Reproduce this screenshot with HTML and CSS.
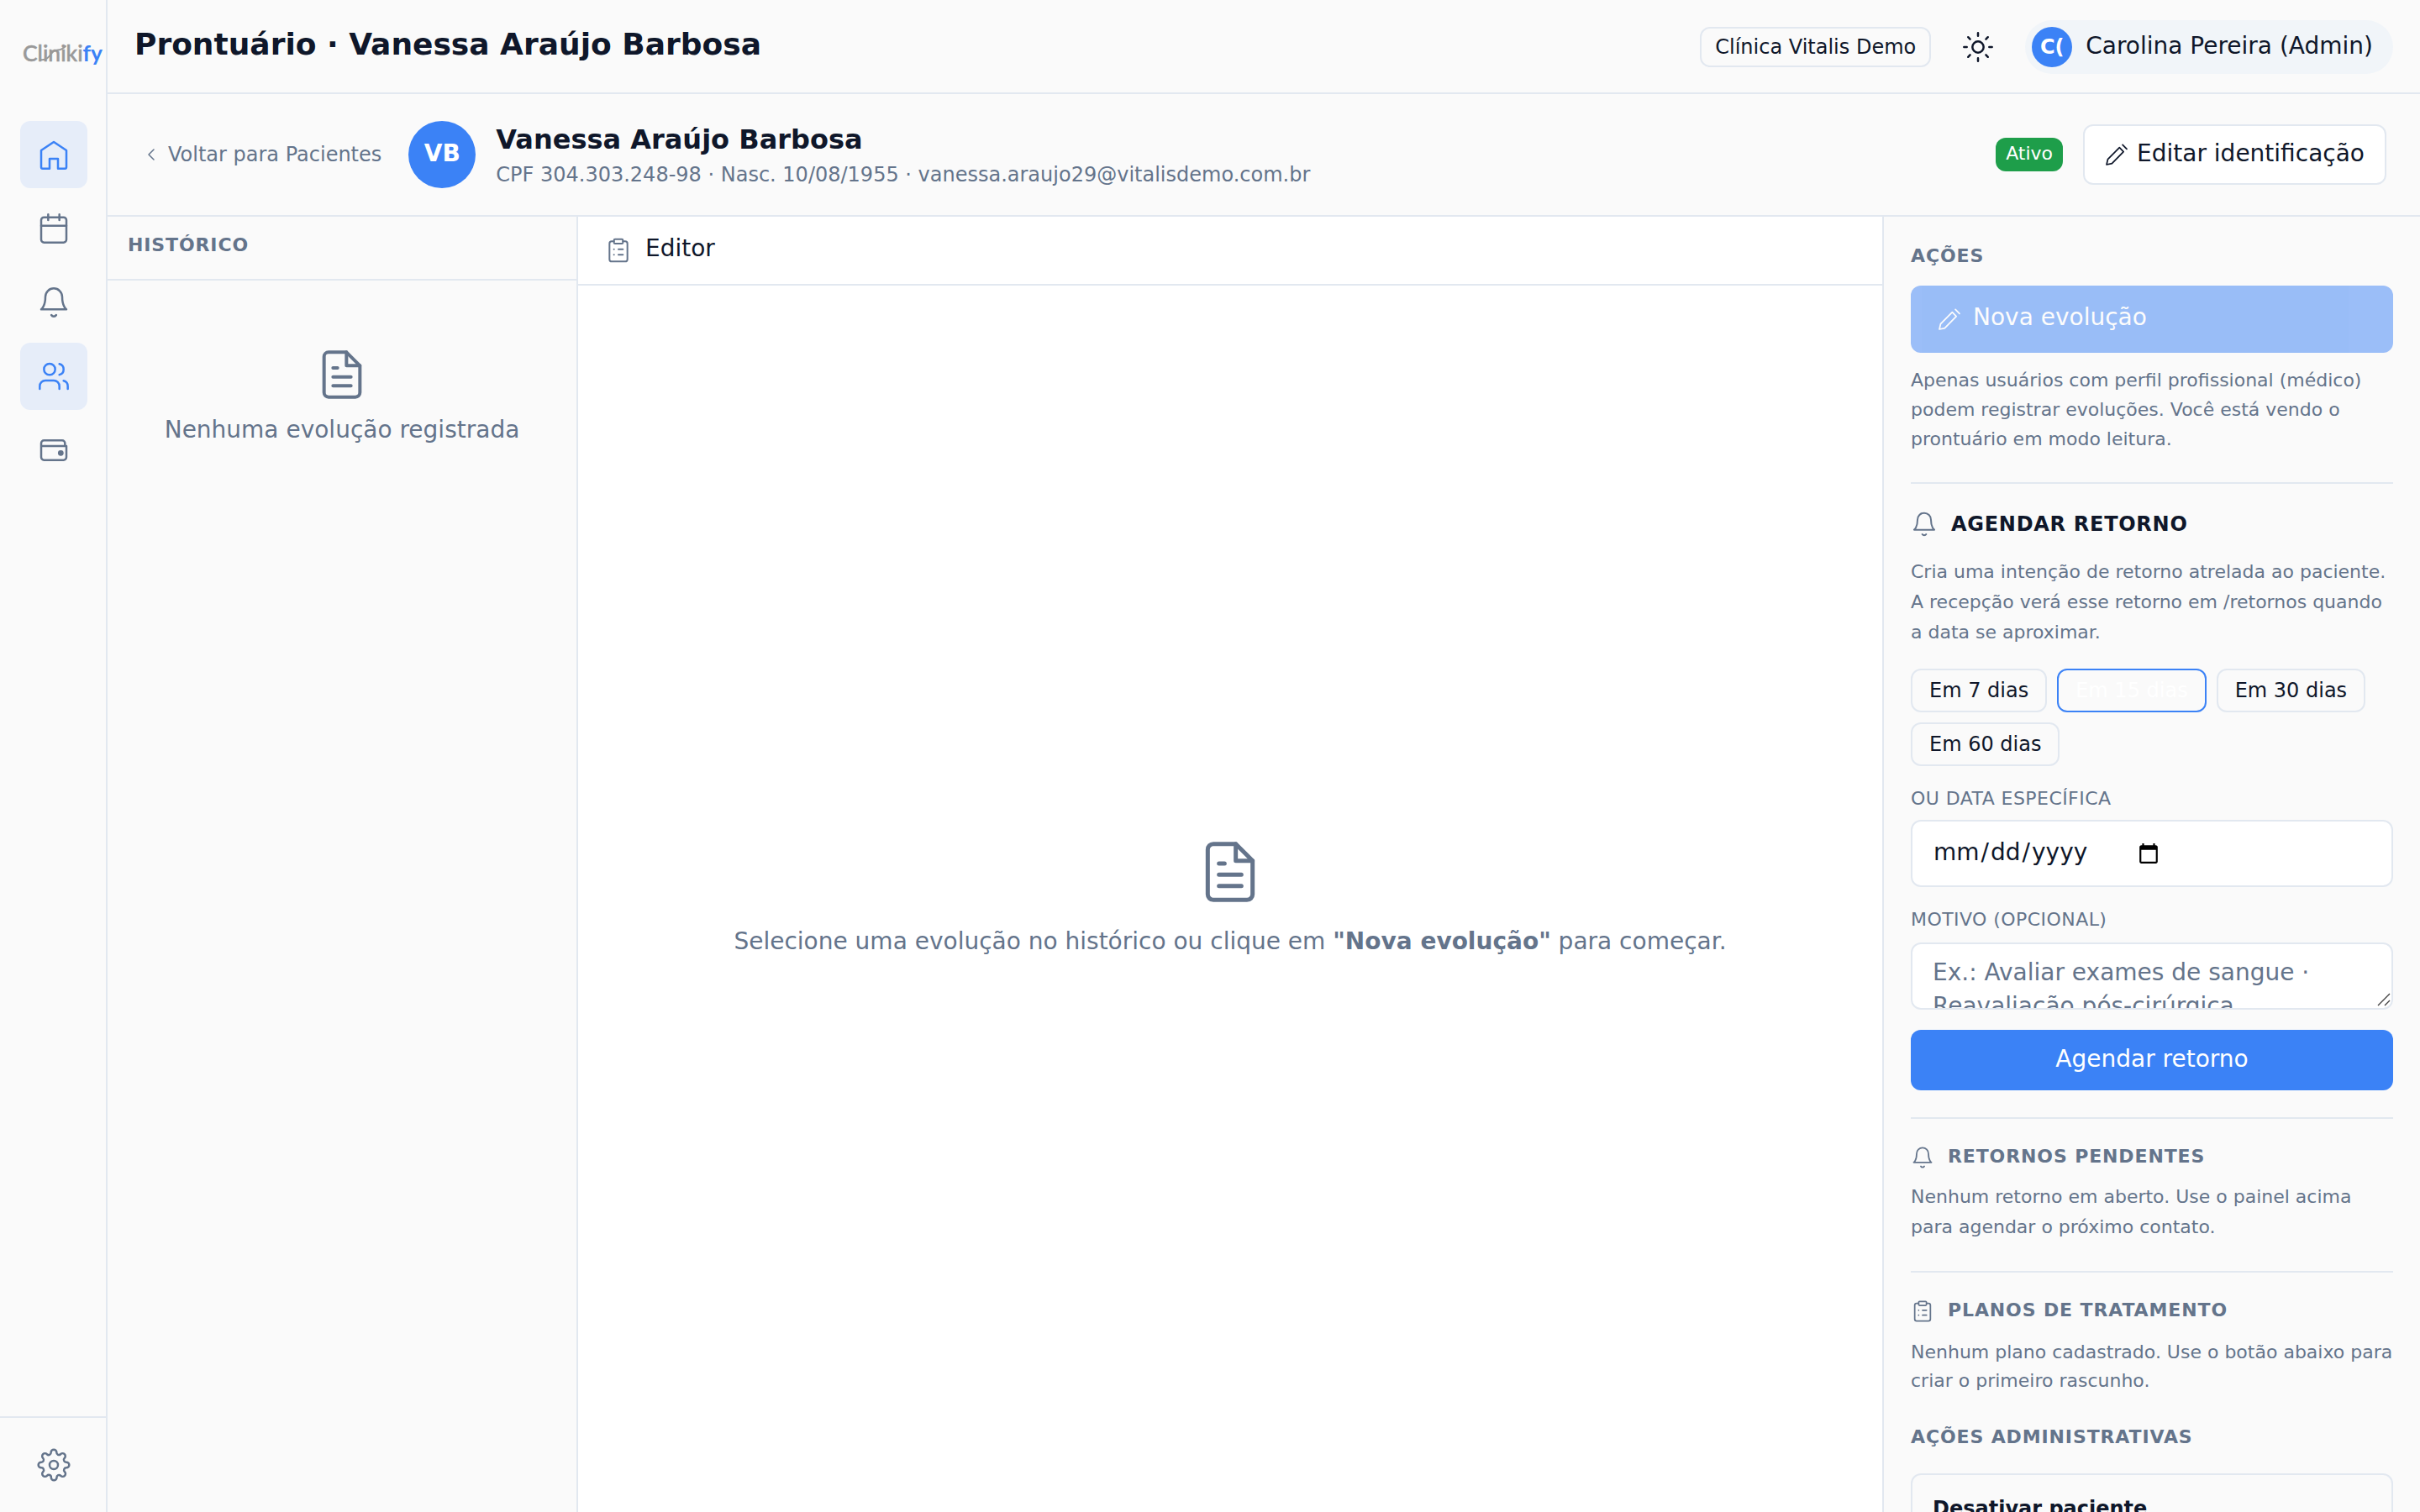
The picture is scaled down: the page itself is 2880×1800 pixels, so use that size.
FILE: index.html
```html
<!DOCTYPE html>
<html lang="pt-BR">

<head>
  <meta charset="UTF-8" />
  <meta name="viewport" content="width=device-width, initial-scale=1.0" />
  <title>Prontuário | Clinikify</title>
  <link rel="stylesheet" href="styles.css">
</head>

<body>
  <!-- Shared icons -->
  <svg class="icon-defs" xmlns="http://www.w3.org/2000/svg">
    <symbol id="i-bell" viewBox="0 0 24 24">
      <path d="M18 8A6 6 0 0 0 6 8c0 7-3 9-3 9h18s-3-2-3-9" />
      <path d="M13.73 21a2 2 0 0 1-3.46 0" />
    </symbol>
    <symbol id="i-file" viewBox="0 0 24 24">
      <path d="M14 2H6a2 2 0 0 0-2 2v16a2 2 0 0 0 2 2h12a2 2 0 0 0 2-2V8z" />
      <path d="M14 2v6h6M16 13H8M16 17H8M10 9H8" />
    </symbol>
    <symbol id="i-clipboard" viewBox="0 0 24 24">
      <rect x="8" y="2" width="8" height="4" rx="1" />
      <path d="M16 4h2a2 2 0 0 1 2 2v14a2 2 0 0 1-2 2H6a2 2 0 0 1-2-2V6a2 2 0 0 1 2-2h2" />
      <path d="M12 11h4M12 16h4M8 11h.01M8 16h.01" />
    </symbol>
    <symbol id="i-pencil" viewBox="0 0 24 24">
      <path d="M14.5 5.8L4.1 16.2 3 21l4.8-1.1L18.1 9.4z" />
      <path d="M17.3 3.3L21 7" />
    </symbol>
  </svg>

  <div class="app">
    <aside class="sidebar">
      <div class="logo">
        <svg width="98" height="36" viewBox="0 0 98 36">
          <text class="logo-text" x="0" y="25" textLength="95" lengthAdjust="spacingAndGlyphs">Cliniki<tspan class="logo-accent">fy</tspan></text>
          <path class="logo-wave" d="M21 23c7 1 10-3 13-7 3-5 7-4 11-5 3-1 4-2 6-4" />
        </svg>
      </div>

      <nav class="nav">
        <a class="nav-item active" href="#" aria-label="Início">
          <svg class="icon icon-40" viewBox="0 0 24 24">
            <path d="M3 9l9-6 9 6v12a1 1 0 0 1-1 1h-5v-7H9v7H4a1 1 0 0 1-1-1z" />
          </svg>
        </a>
        <a class="nav-item" href="#" aria-label="Agenda">
          <svg class="icon icon-40" viewBox="0 0 24 24">
            <rect x="3" y="4" width="18" height="18" rx="2" />
            <path d="M16 2v4M8 2v4M3 10h18" />
          </svg>
        </a>
        <a class="nav-item" href="#" aria-label="Retornos">
          <svg class="icon icon-40"><use href="#i-bell" /></svg>
        </a>
        <a class="nav-item active" href="#" aria-label="Pacientes">
          <svg class="icon icon-40" viewBox="0 0 24 24">
            <circle cx="9" cy="7" r="4" />
            <path d="M16 21v-2a4 4 0 0 0-4-4H6a4 4 0 0 0-4 4v2" />
            <path d="M22 21v-2a4 4 0 0 0-3-3.87M16 3.13a4 4 0 0 1 0 7.75" />
          </svg>
        </a>
        <a class="nav-item" href="#" aria-label="Financeiro">
          <svg class="icon icon-40" viewBox="0 0 24 24">
            <path d="M20 9V7a2 2 0 0 0-2-2H5a2 2 0 0 0-2 2v10a2 2 0 0 0 2 2h14a2 2 0 0 0 2-2V9H3" />
            <circle class="dot" cx="17" cy="14" r="1.3" />
          </svg>
        </a>
      </nav>

      <div class="sidebar-footer">
        <a class="nav-item" href="#" aria-label="Configurações">
          <svg class="icon icon-40" viewBox="0 0 24 24">
            <circle cx="12" cy="12" r="3" />
            <path d="M19.4 15a1.65 1.65 0 0 0 .33 1.82l.06.06a2 2 0 0 1-2.83 2.83l-.06-.06a1.65 1.65 0 0 0-2.8 1.17V21a2 2 0 0 1-4 0v-.09A1.65 1.65 0 0 0 7.2 19.65l-.06.06a2 2 0 0 1-2.83-2.83l.06-.06A1.65 1.65 0 0 0 3.1 14H3a2 2 0 0 1 0-4h.09A1.65 1.65 0 0 0 4.35 7.2l-.06-.06a2 2 0 0 1 2.83-2.83l.06.06A1.65 1.65 0 0 0 10 3.1V3a2 2 0 0 1 4 0v.09a1.65 1.65 0 0 0 2.8 1.26l.06-.06a2 2 0 0 1 2.83 2.83l-.06.06A1.65 1.65 0 0 0 20.9 10H21a2 2 0 0 1 0 4h-.09a1.65 1.65 0 0 0-1.51 1z" />
          </svg>
        </a>
      </div>
    </aside>

    <div class="main">
      <header class="topbar">
        <h1 class="topbar-title">Prontuário · Vanessa Araújo Barbosa</h1>
        <div class="topbar-right">
          <span class="clinic">Clínica Vitalis Demo</span>
          <button class="theme-btn" aria-label="Alternar tema">
            <svg class="icon icon-40" viewBox="0 0 24 24">
              <circle cx="12" cy="12" r="4" />
              <path d="M12 2v2M12 20v2M4.93 4.93l1.41 1.41M17.66 17.66l1.41 1.41M2 12h2M20 12h2M6.34 17.66l-1.41 1.41M19.07 4.93l-1.41 1.41" />
            </svg>
          </button>
          <div class="user">
            <span class="user-avatar">C(</span>
            <span class="user-name">Carolina Pereira (Admin)</span>
          </div>
        </div>
      </header>

      <section class="patient-bar">
        <a class="back" href="#">
          <svg class="icon icon-24" viewBox="0 0 24 24"><path d="M15 18l-6-6 6-6" /></svg>
          <span>Voltar para Pacientes</span>
        </a>
        <div class="patient-avatar">VB</div>
        <div class="patient-info">
          <h2>Vanessa Araújo Barbosa</h2>
          <p>CPF 304.303.248-98 · Nasc. 10/08/1955 · vanessa.araujo29@vitalisdemo.com.br</p>
        </div>
        <span class="badge">Ativo</span>
        <button class="btn-outline">
          <svg class="icon icon-32 thin"><use href="#i-pencil" /></svg>
          <span>Editar identificação</span>
        </button>
      </section>

      <div class="columns">
        <section class="history">
          <div class="history-header">Histórico</div>
          <div class="history-empty">
            <svg class="icon icon-64"><use href="#i-file" /></svg>
            <p>Nenhuma evolução registrada</p>
          </div>
        </section>

        <section class="editor">
          <div class="editor-header">
            <svg class="icon icon-32 muted"><use href="#i-clipboard" /></svg>
            <span>Editor</span>
          </div>
          <div class="editor-empty">
            <svg class="icon icon-80"><use href="#i-file" /></svg>
            <p>Selecione uma evolução no histórico ou clique em <strong>"Nova evolução"</strong> para começar.</p>
          </div>
        </section>

        <aside class="actions">
          <h3 class="label-title">Ações</h3>
          <button class="btn-new" disabled>
            <svg class="icon icon-32 thin"><use href="#i-pencil" /></svg>
            <span>Nova evolução</span>
          </button>
          <p class="hint hint-readonly">Apenas usuários com perfil profissional (médico) podem registrar evoluções. Você está vendo o prontuário em modo leitura.</p>

          <div class="block block-return">
            <h3 class="return-title">
              <svg class="icon icon-32 muted"><use href="#i-bell" /></svg>
              <span>Agendar retorno</span>
            </h3>
            <p class="hint">Cria uma intenção de retorno atrelada ao paciente. A recepção verá esse retorno em /retornos quando a data se aproximar.</p>
            <div class="chips">
              <button class="chip">Em 7 dias</button>
              <button class="chip selected">Em 15 dias</button>
              <button class="chip">Em 30 dias</button>
              <button class="chip">Em 60 dias</button>
            </div>
            <div class="field-label">Ou data específica</div>
            <div class="date-input">
              <span class="date-text"><span>mm</span><span>/</span><span>dd</span><span>/</span><span>yyyy</span></span>
              <svg class="date-icon" viewBox="0 0 24 24">
                <path d="M20 3h-1V1h-2v2H7V1H5v2H4c-1.1 0-2 .9-2 2v16c0 1.1.9 2 2 2h16c1.1 0 2-.9 2-2V5c0-1.1-.9-2-2-2zm0 18H4V8h16v13z" />
              </svg>
            </div>
            <div class="field-label">Motivo (opcional)</div>
            <div class="reason">
              <textarea placeholder="Ex.: Avaliar exames de sangue · Reavaliação pós-cirúrgica"></textarea>
              <svg class="grip" viewBox="0 0 16 16"><path d="M1 15L15 1M9 15l6-6" /></svg>
            </div>
            <button class="btn-primary">Agendar retorno</button>
          </div>

          <div class="block">
            <h3 class="label-title with-icon">
              <svg class="icon icon-28"><use href="#i-bell" /></svg>
              <span>Retornos pendentes</span>
            </h3>
            <p class="hint">Nenhum retorno em aberto. Use o painel acima para agendar o próximo contato.</p>
          </div>

          <div class="block block-plans">
            <h3 class="label-title with-icon">
              <svg class="icon icon-28"><use href="#i-clipboard" /></svg>
              <span>Planos de tratamento</span>
            </h3>
            <p class="hint">Nenhum plano cadastrado. Use o botão abaixo para criar o primeiro rascunho.</p>
          </div>

          <h3 class="label-title admin-title">Ações administrativas</h3>
          <div class="admin-card">
            <strong>Desativar paciente</strong>
          </div>
        </aside>
      </div>
    </div>
  </div>
</body>

</html>
```

FILE: styles.css
```css
/* Reset & Base Styles */
:root {
  --bg: #fafafa;
  --surface: #ffffff;
  --border: #e2e8f0;
  --text: #0f172a;
  --muted: #64748b;
  --primary: #3b82f6;
}

* {
  box-sizing: border-box;
  margin: 0;
  padding: 0;
}

body {
  height: 100vh;
  overflow: hidden;
  font-family: 'DejaVu Sans', sans-serif;
  font-size: 28px;
  line-height: 1.5;
  background-color: var(--bg);
  color: var(--text);
}

button,
textarea {
  font: inherit;
  color: inherit;
}

a {
  color: inherit;
  text-decoration: none;
}

/* Icons */
.icon-defs {
  display: none;
}

.icon {
  display: block;
  flex-shrink: 0;
  fill: none;
  stroke: currentColor;
  stroke-width: 1.5;
  stroke-linecap: round;
  stroke-linejoin: round;
}

.icon.thin {
  stroke-width: 1.3;
}

.icon-24 { width: 24px; height: 24px; }
.icon-28 { width: 28px; height: 28px; }
.icon-32 { width: 32px; height: 32px; }
.icon-40 { width: 40px; height: 40px; }
.icon-64 { width: 64px; height: 64px; }
.icon-80 { width: 80px; height: 80px; }

.icon .dot {
  fill: currentColor;
}

.muted {
  color: var(--muted);
}

/* Layout */
.app {
  display: flex;
  height: 100vh;
}

.main {
  flex: 1;
  min-width: 0;
  display: flex;
  flex-direction: column;
}

/* Sidebar */
.sidebar {
  width: 128px;
  flex-shrink: 0;
  display: flex;
  flex-direction: column;
  border-right: 2px solid var(--border);
}

.logo {
  height: 144px;
  padding: 48px 0 0 27px;
}

.logo svg {
  display: block;
}

.logo-text {
  font-family: Lato, sans-serif;
  font-size: 26px;
  font-weight: 500;
  fill: #999999;
  stroke: #999999;
  stroke-width: 0.5;
}

.logo-accent {
  font-weight: 700;
  fill: var(--primary);
  stroke: none;
}

.logo-wave {
  fill: none;
  stroke: #999999;
  stroke-width: 2;
  stroke-linecap: round;
}

.nav {
  flex: 1;
  display: flex;
  flex-direction: column;
  gap: 8px;
  padding-left: 24px;
}

.nav-item {
  width: 80px;
  height: 80px;
  display: flex;
  align-items: center;
  justify-content: center;
  border-radius: 12px;
  color: var(--muted);
}

.nav-item.active {
  background-color: rgba(59, 130, 246, 0.1);
  color: var(--primary);
}

.sidebar-footer {
  padding: 16px 0 16px 24px;
  border-top: 2px solid var(--border);
}

/* Topbar */
.topbar {
  height: 112px;
  flex-shrink: 0;
  display: flex;
  align-items: center;
  justify-content: space-between;
  padding: 0 32px;
  border-bottom: 2px solid var(--border);
}

.topbar-title {
  font-size: 36px;
  font-weight: 700;
  padding-bottom: 4px;
}

.topbar-right {
  display: flex;
  align-items: center;
  gap: 16px;
  padding-top: 2px;
}

.clinic {
  height: 48px;
  padding: 0 16px;
  border: 2px solid var(--border);
  border-radius: 12px;
  font-size: 24px;
  line-height: 44px;
}

.theme-btn {
  width: 80px;
  height: 80px;
  display: flex;
  align-items: center;
  justify-content: center;
  background: none;
  border: none;
}

.user {
  height: 64px;
  display: flex;
  align-items: center;
  gap: 16px;
  padding: 0 24px 0 8px;
  border-radius: 32px;
  background-color: #f1f5f9;
}

.user-avatar {
  width: 48px;
  height: 48px;
  border-radius: 50%;
  background-color: var(--primary);
  color: #fff;
  font-size: 24px;
  font-weight: 700;
  line-height: 48px;
  text-align: center;
}

.user-name {
  padding-bottom: 3px;
}

/* Patient bar */
.patient-bar {
  height: 146px;
  flex-shrink: 0;
  display: flex;
  align-items: center;
  gap: 24px;
  padding: 0 40px 0 32px;
  border-bottom: 2px solid var(--border);
}

.back {
  display: flex;
  align-items: center;
  gap: 8px;
  padding: 0 8px;
  color: var(--muted);
  font-size: 24px;
}

.patient-avatar {
  width: 80px;
  height: 80px;
  border-radius: 50%;
  background-color: var(--primary);
  color: #fff;
  font-weight: 700;
  line-height: 78px;
  text-align: center;
}

.patient-info {
  flex: 1;
}

.patient-info h2 {
  font-size: 32px;
}

.patient-info p {
  font-size: 24px;
  color: var(--muted);
}

.badge {
  height: 40px;
  padding: 0 12px;
  border-radius: 12px;
  background-color: #1e9e4a;
  color: #fff;
  font-size: 22px;
  line-height: 38px;
}

.btn-outline {
  height: 72px;
  display: flex;
  align-items: center;
  gap: 8px;
  padding: 0 24px 0 22px;
  background-color: var(--surface);
  border: 2px solid var(--border);
  border-radius: 12px;
}

.btn-outline span {
  padding-bottom: 3px;
}

/* Three columns */
.columns {
  flex: 1;
  min-height: 0;
  display: grid;
  grid-template-columns: 560px 1fr 640px;
}

/* History */
.history {
  border-right: 2px solid var(--border);
}

.history-header {
  height: 76px;
  padding: 17px 24px 0;
  border-bottom: 2px solid var(--border);
  color: var(--muted);
  font-size: 22px;
  font-weight: 700;
  letter-spacing: 0.04em;
  text-transform: uppercase;
}

.history-empty {
  display: flex;
  flex-direction: column;
  align-items: center;
  gap: 13px;
  padding-top: 80px;
  color: var(--muted);
}

/* Editor */
.editor {
  display: flex;
  flex-direction: column;
  background-color: var(--surface);
}

.editor-header {
  height: 82px;
  display: flex;
  align-items: center;
  gap: 16px;
  padding: 0 32px;
  border-bottom: 2px solid var(--border);
}

.editor-header span {
  padding-bottom: 4px;
}

.editor-empty {
  flex: 1;
  display: flex;
  flex-direction: column;
  align-items: center;
  justify-content: center;
  gap: 22px;
  color: var(--muted);
}

/* Actions panel */
.actions {
  overflow: hidden;
  padding: 30px 32px 0;
  border-left: 2px solid var(--border);
}

.label-title {
  color: var(--muted);
  font-size: 22px;
  font-weight: 700;
  line-height: 33px;
  letter-spacing: 0.04em;
  text-transform: uppercase;
}

.with-icon {
  display: flex;
  align-items: center;
  gap: 16px;
}

.with-icon span {
  margin-top: -3px;
}

.btn-new {
  width: 100%;
  height: 80px;
  display: flex;
  align-items: center;
  gap: 12px;
  margin-top: 19px;
  padding: 0 30px;
  border: none;
  border-radius: 12px;
  background-color: var(--primary);
  color: #fff;
  opacity: 0.5;
}

.btn-new span {
  padding-bottom: 4px;
}

.hint {
  color: var(--muted);
  font-size: 22px;
  line-height: 36px;
}

.hint-readonly {
  margin: 15px 0 34px;
  line-height: 35px;
}

.block {
  padding: 31px 0 34px;
  border-top: 2px solid var(--border);
}

.block .hint {
  margin-top: 14px;
}

.block-return {
  padding: 32px 0;
}

.return-title {
  height: 32px;
  display: flex;
  align-items: center;
  gap: 16px;
  font-size: 24px;
  letter-spacing: 0.03em;
  text-transform: uppercase;
}

.block-return .hint {
  margin-top: 23px;
}

.chips {
  display: flex;
  flex-wrap: wrap;
  gap: 12px;
  margin-top: 25px;
}

.chip {
  height: 52px;
  padding: 0 20px;
  background: none;
  border: 2px solid var(--border);
  border-radius: 12px;
  font-size: 24px;
  line-height: 48px;
}

.chip.selected {
  border-color: var(--primary);
  color: #fff;
}

.field-label {
  margin-top: 22px;
  color: var(--muted);
  font-size: 22px;
  line-height: 33px;
  letter-spacing: 0.02em;
  text-transform: uppercase;
}

.date-input {
  height: 80px;
  display: flex;
  align-items: center;
  gap: 59px;
  margin-top: 9px;
  padding: 0 24px;
  background-color: var(--surface);
  border: 2px solid var(--border);
  border-radius: 12px;
}

.date-text {
  padding-bottom: 3px;
}

.date-text span {
  padding: 0 1px;
}

.date-icon {
  width: 26px;
  height: 26px;
  fill: #000;
}

.reason {
  position: relative;
  height: 80px;
  margin-top: 11px;
}

.reason textarea {
  display: block;
  width: 100%;
  height: 80px;
  padding: 14px 24px;
  background-color: var(--surface);
  border: 2px solid var(--border);
  border-radius: 12px;
  line-height: 40px;
  overflow: hidden;
  resize: none;
}

.reason textarea::placeholder {
  color: var(--muted);
  opacity: 1;
}

.grip {
  position: absolute;
  right: 3px;
  bottom: 4px;
  width: 16px;
  height: 16px;
  fill: none;
  stroke: #444;
  stroke-width: 1.4;
}

.btn-primary {
  width: 100%;
  height: 72px;
  margin-top: 24px;
  padding-bottom: 3px;
  border: none;
  border-radius: 12px;
  background-color: var(--primary);
  color: #fff;
}

.block-plans {
  padding-bottom: 33px;
}

.block-plans .hint {
  margin-top: 17px;
  line-height: 34px;
}

.admin-card {
  height: 200px;
  margin-top: 27px;
  padding: 22px 24px;
  border: 2px solid var(--border);
  border-radius: 12px;
  font-size: 24px;
}
```
